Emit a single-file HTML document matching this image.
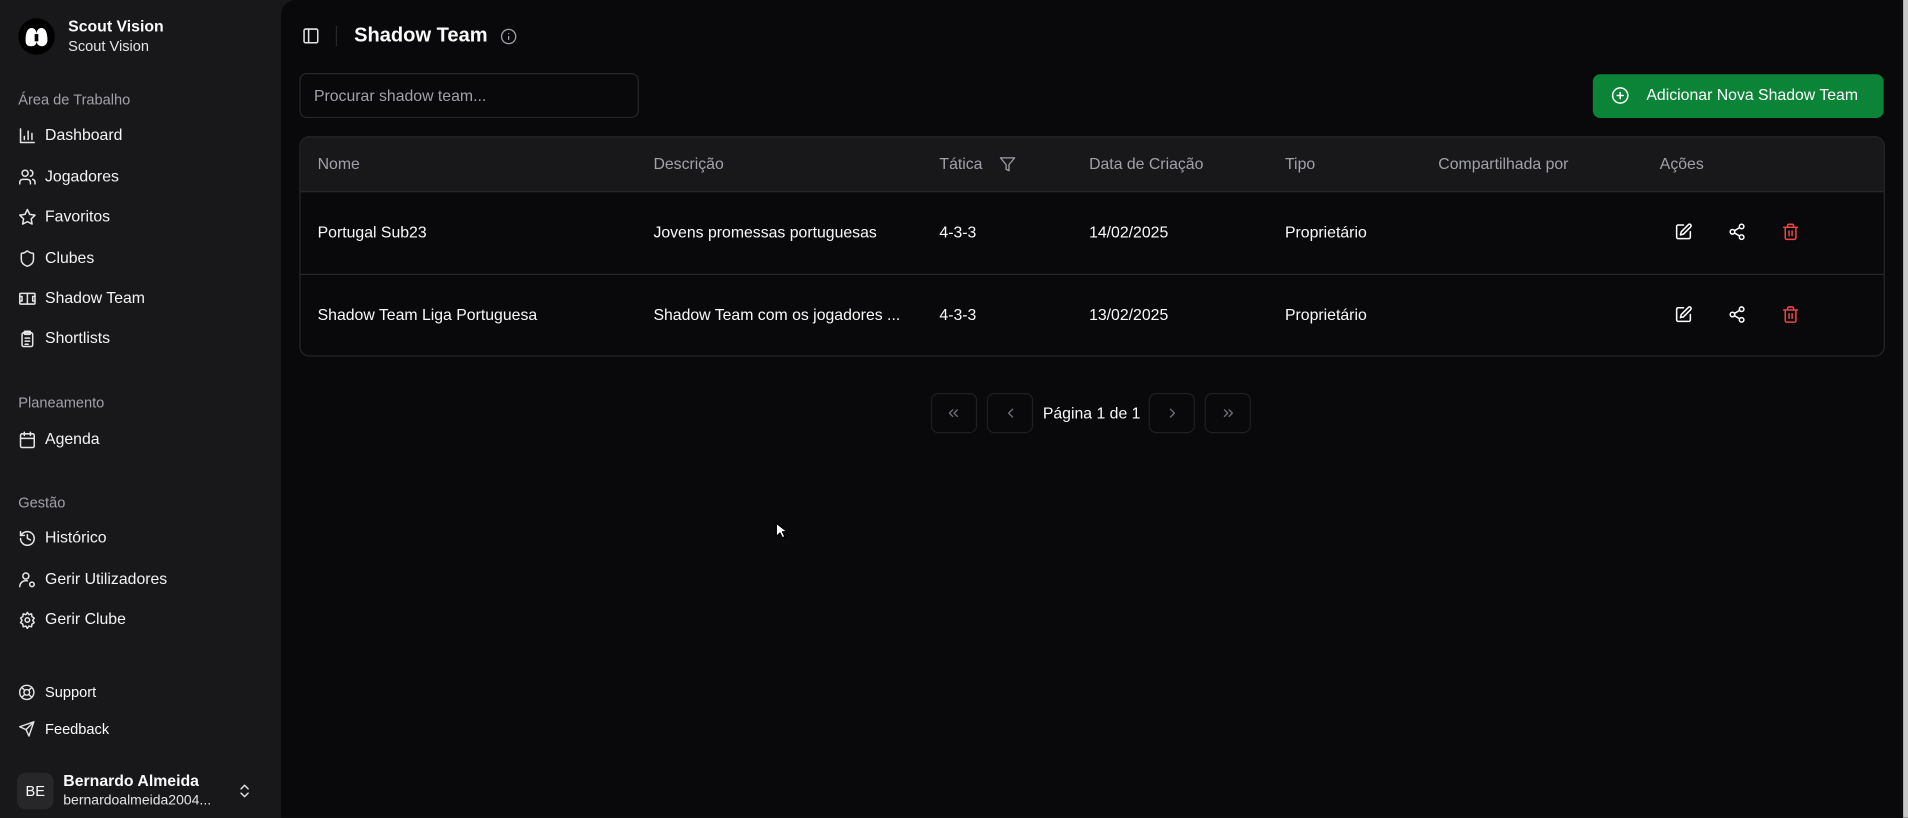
<!DOCTYPE html>
<html><head><meta charset="utf-8">
<style>
*{box-sizing:border-box;margin:0;padding:0}
html,body{width:1908px;height:818px;overflow:hidden;background:#18181b}
#w{width:1568px;height:672px;position:relative;transform:scale(1.21684);transform-origin:0 0;font-family:"Liberation Sans",sans-serif;color:#fafafa;background:#18181b}
.a{position:absolute;white-space:nowrap}
svg{position:absolute;fill:none;stroke:currentColor;stroke-width:2;stroke-linecap:round;stroke-linejoin:round}
.lbl{font-size:12px;color:#a1a1aa}
.it{font-size:13px;color:#f4f4f5}
.ic{width:15px;height:15px;color:#e4e4e7}
#main{position:absolute;left:231px;top:0;width:1333px;height:672px;background:#09090b;border-top-left-radius:12px}
.th{font-size:13px;color:#a1a1aa}
.td{font-size:13px;color:#fafafa}
.pb{position:absolute;top:323px;width:38px;height:33px;border:1px solid #1f1f23;border-radius:6px}
</style></head><body><div id="w">
<!-- sidebar -->
<div class="a" style="left:15px;top:15px;width:30px;height:30px;border-radius:50%;background:#000"></div>
<svg style="left:19px;top:21px;width:22px;height:18px;stroke:none;fill:#fff" viewBox="0 0 22 18"><path d="M2 12C2 5 4 2 7 2s4 3 4 5c0-2 1-5 4-5s5 3 5 10c0 3-2 5-4.5 5S11 15 11 13c0 2-1 4-4.5 4S2 15 2 12z"/><rect x="9.5" y="7" width="3" height="6" fill="#000"/></svg>
<div class="a" style="left:56px;top:14px;font-size:13px;font-weight:bold">Scout Vision</div>
<div class="a" style="left:56px;top:31px;font-size:12px;color:#e4e4e7">Scout Vision</div>
<div class="a lbl" style="left:15px;top:75px">Área de Trabalho</div>
<svg class="ic" style="left:15px;top:104px" viewBox="0 0 24 24"><path d="M3 3v18h18M8 17v-4M13 17V6M18 17v-8"/></svg>
<div class="a it" style="left:37px;top:103px">Dashboard</div>
<svg class="ic" style="left:15px;top:138px" viewBox="0 0 24 24"><path d="M16 21v-2a4 4 0 0 0-4-4H6a4 4 0 0 0-4 4v2"/><circle cx="9" cy="7" r="4"/><path d="M22 21v-2a4 4 0 0 0-3-3.9M16 3.1a4 4 0 0 1 0 7.8"/></svg>
<div class="a it" style="left:37px;top:137px">Jogadores</div>
<svg class="ic" style="left:15px;top:171px" viewBox="0 0 24 24"><path d="M12 2l3.1 6.3 6.9 1-5 4.9 1.2 6.8L12 17.8 5.8 21l1.2-6.8-5-4.9 6.9-1z"/></svg>
<div class="a it" style="left:37px;top:170px">Favoritos</div>
<svg class="ic" style="left:15px;top:205px" viewBox="0 0 24 24"><path d="M20 13c0 5-3.5 7.5-7.7 9a1 1 0 0 1-.7 0C7.5 20.5 4 18 4 13V6a1 1 0 0 1 1-1c2 0 4.5-1.2 6.2-2.7a1 1 0 0 1 1.3 0C14.5 3.8 17 5 19 5a1 1 0 0 1 1 1z"/></svg>
<div class="a it" style="left:37px;top:204px">Clubes</div>
<svg class="ic" style="left:15px;top:238px" viewBox="0 0 24 24"><rect x="2" y="5" width="20" height="14" rx="1"/><path d="M12 5v14M2 9h3v6H2M22 9h-3v6h3"/></svg>
<div class="a it" style="left:37px;top:237px">Shadow Team</div>
<svg class="ic" style="left:15px;top:271px" viewBox="0 0 24 24"><rect x="5" y="4" width="14" height="18" rx="2"/><rect x="8" y="2" width="8" height="4" rx="1"/><path d="M9 11h6M9 15h6M9 19h4"/></svg>
<div class="a it" style="left:37px;top:270px">Shortlists</div>
<div class="a lbl" style="left:15px;top:324px">Planeamento</div>
<svg class="ic" style="left:15px;top:354px" viewBox="0 0 24 24"><rect x="3" y="4" width="18" height="18" rx="2"/><path d="M16 2v4M8 2v4M3 10h18"/></svg>
<div class="a it" style="left:37px;top:353px">Agenda</div>
<div class="a lbl" style="left:15px;top:406px">Gestão</div>
<svg class="ic" style="left:15px;top:435px" viewBox="0 0 24 24"><path d="M3 12a9 9 0 1 0 9-9 9.8 9.8 0 0 0-6.7 2.7L3 8"/><path d="M3 3v5h5M12 7v5l4 2"/></svg>
<div class="a it" style="left:37px;top:434px">Histórico</div>
<svg class="ic" style="left:15px;top:469px" viewBox="0 0 24 24"><circle cx="10" cy="7" r="4"/><path d="M2 21a8 8 0 0 1 10-7.7"/><circle cx="18" cy="18" r="3"/></svg>
<div class="a it" style="left:37px;top:468px">Gerir Utilizadores</div>
<svg class="ic" style="left:15px;top:502px" viewBox="0 0 24 24"><circle cx="12" cy="12" r="3"/><path d="M12 2l2 3 3.5-1 .5 3.5 3 2-2 3 2 3-3 2-.5 3.5-3.5-1-2 3-2-3-3.5 1L6 17.5l-3-2 2-3-2-3 3-2L6.5 4 10 5z"/></svg>
<div class="a it" style="left:37px;top:501px">Gerir Clube</div>
<svg class="ic" style="left:15px;top:562px;width:14px;height:14px" viewBox="0 0 24 24"><circle cx="12" cy="12" r="10"/><circle cx="12" cy="12" r="4"/><path d="M4.9 4.9l4.3 4.3M14.8 14.8l4.3 4.3M14.8 9.2l4.3-4.3M4.9 19.1l4.3-4.3"/></svg>
<div class="a" style="left:37px;top:562px;font-size:12px">Support</div>
<svg class="ic" style="left:15px;top:592px;width:14px;height:14px" viewBox="0 0 24 24"><path d="M22 2L11 13M22 2l-7 20-4-9-9-4z"/></svg>
<div class="a" style="left:37px;top:592px;font-size:12px">Feedback</div>
<div class="a" style="left:14px;top:635px;width:30px;height:30px;border-radius:7px;background:#27272a;font-size:12px;text-align:center;line-height:30px">BE</div>
<div class="a" style="left:52px;top:634px;font-size:13px;font-weight:bold">Bernardo Almeida</div>
<div class="a" style="left:52px;top:652px;font-size:11.5px;color:#e4e4e7">bernardoalmeida2004...</div>
<svg style="left:194px;top:643px;width:14px;height:14px;color:#e4e4e7" viewBox="0 0 24 24"><path d="M7 15l5 5 5-5M7 9l5-5 5 5"/></svg>
<!-- main -->
<div id="main"></div>
<div class="a" style="left:1564px;top:0;width:4px;height:672px;background:#c8c8c8"></div>
<svg style="left:248px;top:22px;width:15px;height:15px;color:#e4e4e7" viewBox="0 0 24 24"><rect x="3" y="3" width="18" height="18" rx="2"/><path d="M9 3v18"/></svg>
<div class="a" style="left:276px;top:21px;width:1px;height:17px;background:#27272a"></div>
<div class="a" style="left:291px;top:20px;font-size:16.5px;font-weight:bold">Shadow Team</div>
<svg style="left:411px;top:23px;width:14px;height:14px;color:#a1a1aa;stroke-width:1.8" viewBox="0 0 24 24"><circle cx="12" cy="12" r="10"/><path d="M12 16v-4M12 8h.01"/></svg>
<div class="a" style="left:246px;top:60px;width:279px;height:37px;border:1px solid #27272a;border-radius:6px"></div>
<div class="a" style="left:258px;top:71px;font-size:13px;color:#a1a1aa">Procurar shadow team...</div>
<div class="a" style="left:1309px;top:61px;width:239px;height:36px;background:#0b8437;border-radius:6px"></div>
<svg style="left:1324px;top:71px;width:15px;height:15px;color:#fff" viewBox="0 0 24 24"><circle cx="12" cy="12" r="10"/><path d="M8 12h8M12 8v8"/></svg>
<div class="a" style="left:1353px;top:70px;font-size:13px;color:#fff">Adicionar Nova Shadow Team</div>
<!-- table -->
<div class="a" style="left:246px;top:112px;width:1303px;height:181px;border:1px solid #27272a;border-radius:8px;overflow:hidden">
<div style="height:45px;background:#18181b;border-bottom:1px solid #27272a"></div>
<div style="height:68px;border-bottom:1px solid #27272a"></div>
</div>
<div class="a th" style="left:261px;top:127px">Nome</div>
<div class="a th" style="left:537px;top:127px">Descrição</div>
<div class="a th" style="left:772px;top:127px">Tática</div>
<svg style="left:821px;top:128px;width:14px;height:14px;color:#a1a1aa;stroke-width:1.8" viewBox="0 0 24 24"><path d="M22 3H2l8 9.5V19l4 2v-8.5z"/></svg>
<div class="a th" style="left:895px;top:127px">Data de Criação</div>
<div class="a th" style="left:1056px;top:127px">Tipo</div>
<div class="a th" style="left:1182px;top:127px">Compartilhada por</div>
<div class="a th" style="left:1364px;top:127px">Ações</div>
<div class="a td" style="left:261px;top:183px">Portugal Sub23</div>
<div class="a td" style="left:537px;top:183px">Jovens promessas portuguesas</div>
<div class="a td" style="left:772px;top:183px">4-3-3</div>
<div class="a td" style="left:895px;top:183px">14/02/2025</div>
<div class="a td" style="left:1056px;top:183px">Proprietário</div>
<div class="a td" style="left:261px;top:251px">Shadow Team Liga Portuguesa</div>
<div class="a td" style="left:537px;top:251px">Shadow Team com os jogadores ...</div>
<div class="a td" style="left:772px;top:251px">4-3-3</div>
<div class="a td" style="left:895px;top:251px">13/02/2025</div>
<div class="a td" style="left:1056px;top:251px">Proprietário</div>
<svg style="left:1376px;top:183px;width:15px;height:15px;color:#fff" viewBox="0 0 24 24"><path d="M12 3H5a2 2 0 0 0-2 2v14a2 2 0 0 0 2 2h14a2 2 0 0 0 2-2v-7"/><path d="M18.4 2.6a2.1 2.1 0 0 1 3 3L12 15l-4 1 1-4z"/></svg>
<svg style="left:1420px;top:183px;width:15px;height:15px;color:#fff" viewBox="0 0 24 24"><circle cx="18" cy="5" r="3"/><circle cx="6" cy="12" r="3"/><circle cx="18" cy="19" r="3"/><path d="M8.6 13.5l6.8 4M15.4 6.5l-6.8 4"/></svg>
<svg style="left:1464px;top:183px;width:15px;height:15px;color:#ef4444" viewBox="0 0 24 24"><path d="M3 6h18M19 6v14a2 2 0 0 1-2 2H7a2 2 0 0 1-2-2V6M8 6V4a2 2 0 0 1 2-2h4a2 2 0 0 1 2 2v2M10 11v6M14 11v6"/></svg>
<svg style="left:1376px;top:251px;width:15px;height:15px;color:#fff" viewBox="0 0 24 24"><path d="M12 3H5a2 2 0 0 0-2 2v14a2 2 0 0 0 2 2h14a2 2 0 0 0 2-2v-7"/><path d="M18.4 2.6a2.1 2.1 0 0 1 3 3L12 15l-4 1 1-4z"/></svg>
<svg style="left:1420px;top:251px;width:15px;height:15px;color:#fff" viewBox="0 0 24 24"><circle cx="18" cy="5" r="3"/><circle cx="6" cy="12" r="3"/><circle cx="18" cy="19" r="3"/><path d="M8.6 13.5l6.8 4M15.4 6.5l-6.8 4"/></svg>
<svg style="left:1464px;top:251px;width:15px;height:15px;color:#ef4444" viewBox="0 0 24 24"><path d="M3 6h18M19 6v14a2 2 0 0 1-2 2H7a2 2 0 0 1-2-2V6M8 6V4a2 2 0 0 1 2-2h4a2 2 0 0 1 2 2v2M10 11v6M14 11v6"/></svg>
<!-- pagination -->
<div class="pb" style="left:765px"></div><div class="pb" style="left:811px"></div><div class="pb" style="left:944px"></div><div class="pb" style="left:990px"></div>
<svg style="left:777px;top:333px;width:13px;height:13px;color:#71717a" viewBox="0 0 24 24"><path d="M11 17l-5-5 5-5M18 17l-5-5 5-5"/></svg>
<svg style="left:824px;top:333px;width:13px;height:13px;color:#71717a" viewBox="0 0 24 24"><path d="M15 18l-6-6 6-6"/></svg>
<svg style="left:957px;top:333px;width:13px;height:13px;color:#71717a" viewBox="0 0 24 24"><path d="M9 18l6-6-6-6"/></svg>
<svg style="left:1003px;top:333px;width:13px;height:13px;color:#71717a" viewBox="0 0 24 24"><path d="M13 17l5-5-5-5M6 17l5-5-5-5"/></svg>
<div class="a" style="left:857px;top:332px;font-size:13px">Página 1 de 1</div>
<svg style="left:637px;top:429px;width:10px;height:14px;stroke:#000;stroke-width:1;fill:#fff" viewBox="0 0 10 14"><path d="M1 1v11l3-3 2 4 2-1-2-4h4z"/></svg>
</div></body></html>
